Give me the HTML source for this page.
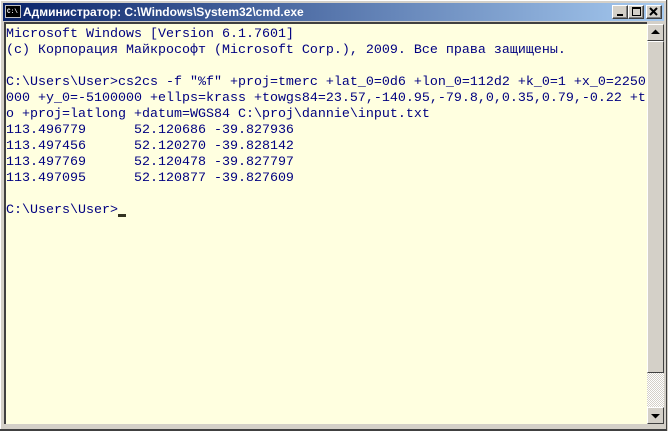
<!DOCTYPE html>
<html><head><meta charset="utf-8"><style>
*{margin:0;padding:0}
body{width:668px;height:431px;overflow:hidden;background:#d4d0c8;position:relative;font-family:"Liberation Sans",sans-serif}
.win{position:absolute;left:0;top:0;width:666px;height:429px;border-right:1px solid #404040;border-bottom:2px solid #404040;background:#d4d0c8;box-shadow:inset 1px 1px 0 #fff}
.title{position:absolute;left:3px;top:3px;width:661px;height:18px;background:linear-gradient(to right,#0a246a,#a6caf0)}
.title span{position:absolute;left:20px;top:2px;color:#fff;font-weight:bold;font-size:12px;white-space:nowrap}
.ico{position:absolute;left:2px;top:2px;width:14px;height:11px;background:#000;border:1px solid #c0c0c0;color:#fff;font:bold 6px "Liberation Mono",monospace;line-height:11px;text-indent:1px}
.btn{position:absolute;top:5px;width:14px;height:12px;background:#d4d0c8;border:1px solid;border-color:#fff #404040 #404040 #fff;box-shadow:inset -1px -1px 0 #808080}
.con{position:absolute;left:4px;top:22px;width:641px;height:400px;background:#ffffe0;border-left:2px solid #404040;border-top:2px solid #404040}
pre{position:absolute;left:0;top:3px;font:13.33px/16px "Liberation Mono",monospace;color:#000080;white-space:pre}
.sb{position:absolute;left:647px;top:24px;width:17px;height:400px;background:repeating-conic-gradient(#d4d0c8 0 25%,#fff 0 50%) 0 0/2px 2px}
.sbb{position:absolute;left:0;width:15px;height:15px;background:#d4d0c8;border:1px solid;border-color:#fff #404040 #404040 #fff}
.thumb{position:absolute;left:0;top:17px;width:15px;height:330px;background:#d4d0c8;border:1px solid;border-color:#fff #404040 #404040 #fff}
.cur{position:absolute;left:112px;top:190px;width:8px;height:3px;background:#333322}
</style></head><body>
<div class="win">
<div class="title"><div class="ico">C:\</div><span>Администратор: C:\Windows\System32\cmd.exe</span></div>
<div class="btn" style="left:612px"><div style="position:absolute;left:4px;top:8px;width:6px;height:2px;background:#000"></div></div>
<div class="btn" style="left:628px"><div style="position:absolute;left:3px;top:1px;width:7px;height:6px;border:1px solid #000;border-top-width:2px"></div></div>
<div class="btn" style="left:646px"><svg width="14" height="12" style="position:absolute;left:0;top:0"><path d="M3 2L10 9M10 2L3 9" stroke="#000" stroke-width="2"/></svg></div>
<div class="con"><pre>Microsoft Windows [Version 6.1.7601]
(c) Корпорация Майкрософт (Microsoft Corp.), 2009. Все права защищены.

C:\Users\User&gt;cs2cs -f "%f" +proj=tmerc +lat_0=0d6 +lon_0=112d2 +k_0=1 +x_0=2250
000 +y_0=-5100000 +ellps=krass +towgs84=23.57,-140.95,-79.8,0,0.35,0.79,-0.22 +t
o +proj=latlong +datum=WGS84 C:\proj\dannie\input.txt
113.496779      52.120686 -39.827936
113.497456      52.120270 -39.828142
113.497769      52.120478 -39.827797
113.497095      52.120877 -39.827609

C:\Users\User&gt;</pre><div class="cur"></div></div>
<div class="sb">
<div class="sbb" style="top:0"><svg width="15" height="15"><path d="M3 9L7.5 4.5L12 9Z" fill="#000"/></svg></div>
<div class="thumb"></div>
<div class="sbb" style="top:383px"><svg width="15" height="15"><path d="M3 6L7.5 10.5L12 6Z" fill="#000"/></svg></div>
</div>
</div>
</body></html>
